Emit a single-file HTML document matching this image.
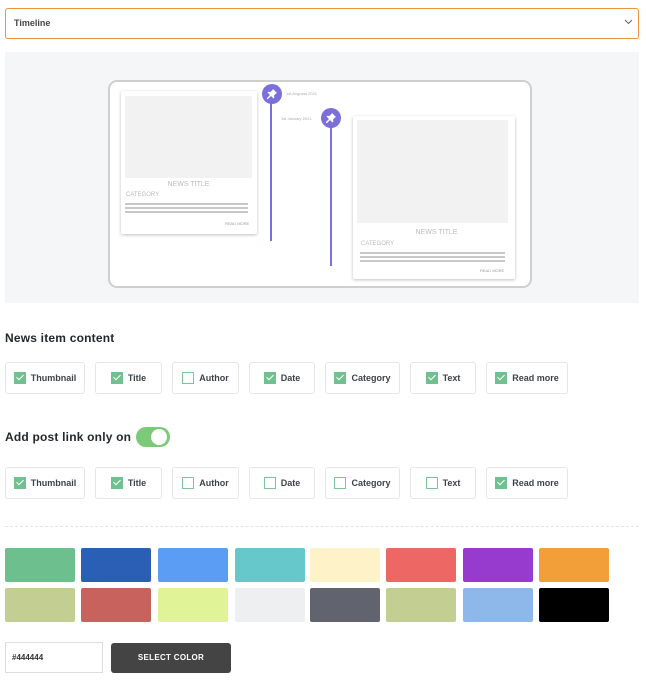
<!DOCTYPE html>
<html><head><meta charset="utf-8"><style>
*{box-sizing:border-box;margin:0;padding:0}
body{width:646px;height:692px;background:#fff;font-family:"Liberation Sans",sans-serif;position:relative;overflow:hidden;color:#23282d}
.a{position:absolute}
.sel{left:5px;top:8px;width:634px;height:31px;border:1px solid #f0923a;border-radius:3px;font-size:9px;font-weight:bold;color:#444;padding:9px 0 0 8px}
.cb{position:absolute;height:32px;border:1px solid #e6e6e6;border-radius:3px;font-size:9px;font-weight:bold;color:#3c434a;display:flex;align-items:center;justify-content:center;gap:5px}
.bx{width:12px;height:12px;border:1.5px solid #7cc49a;display:inline-block;position:relative}
.bx.on{background:#72c08f;border-color:#72c08f}
.bx.on:after{content:"";position:absolute;left:3px;top:0px;width:3px;height:6px;border:solid #fff;border-width:0 1.5px 1.5px 0;transform:rotate(45deg)}
h3{position:absolute;font-size:12px;font-weight:bold;color:#23282d;letter-spacing:.2px}
.sw{position:absolute;width:70px;height:34px;border-radius:2px}
.card{position:absolute;background:#fff;box-shadow:0 1px 3px rgba(0,0,0,.25);border-radius:2px}
.img{position:absolute;background:#f2f2f2}
.t{position:absolute;color:#bbb;font-size:7px;text-align:center}
.ln{position:absolute;height:2px;background:#c8c8c8}
.pin{position:absolute;width:20px;height:20px;border-radius:50%;background:#7b6fdc}
.vl{position:absolute;width:2px;background:#7b6fdc}
</style></head><body>
<div class="a sel">Timeline</div>
<svg class="a" style="left:624px;top:19px" width="9" height="6" viewBox="0 0 9 6"><path d="M1 1l3.5 3.5L8 1" fill="none" stroke="#666" stroke-width="1"/></svg>

<div class="a" style="left:5px;top:52px;width:634px;height:251px;background:#f5f6f8"></div>
<div class="a" style="left:108px;top:80px;width:424px;height:208px;border:2px solid #cfcfcf;border-radius:9px;background:#fff"></div>

<div class="card" style="left:121px;top:91px;width:136px;height:143px"></div>
<div class="img" style="left:125px;top:96px;width:127px;height:82px"></div>
<div class="t" style="left:125px;top:181px;width:127px;font-size:7px">NEWS TITLE</div>
<div class="t" style="left:126px;top:192px;font-size:6px">CATEGORY</div>
<div class="ln" style="left:125px;top:203px;width:123px"></div>
<div class="ln" style="left:125px;top:207px;width:123px"></div>
<div class="ln" style="left:125px;top:211px;width:123px"></div>
<div class="t" style="left:225px;top:221px;font-size:4px;color:#999">READ MORE</div>

<div class="vl" style="left:270px;top:95px;height:146px"></div>
<div class="pin" style="left:262px;top:84px"></div>
<div class="t" style="left:286px;top:91px;font-size:4px;color:#aaa">1st Auguest 2021</div>
<div class="vl" style="left:330px;top:119px;height:147px"></div>
<div class="pin" style="left:321px;top:108px"></div>
<div class="t" style="left:281px;top:116px;font-size:4px;color:#aaa">1st January 2021</div>
<svg class="a" style="left:266px;top:88px" width="12" height="12" viewBox="0 0 12 12"><path d="M7 1l4 4-1 .5-2 2 .3 2.2-.8.8L5 8 2 11 1 11 1 10 4 7 1.5 4.5l.8-.8 2.2.3 2-2z" fill="#fff"/></svg>
<svg class="a" style="left:325px;top:112px" width="12" height="12" viewBox="0 0 12 12"><path d="M7 1l4 4-1 .5-2 2 .3 2.2-.8.8L5 8 2 11 1 11 1 10 4 7 1.5 4.5l.8-.8 2.2.3 2-2z" fill="#fff"/></svg>

<div class="card" style="left:353px;top:116px;width:162px;height:163px"></div>
<div class="img" style="left:357px;top:120px;width:151px;height:103px"></div>
<div class="t" style="left:357px;top:229px;width:159px;font-size:7px">NEWS TITLE</div>
<div class="t" style="left:361px;top:241px;font-size:6px">CATEGORY</div>
<div class="ln" style="left:360px;top:252px;width:145px"></div>
<div class="ln" style="left:360px;top:256px;width:145px"></div>
<div class="ln" style="left:360px;top:260px;width:145px"></div>
<div class="t" style="left:480px;top:268px;font-size:4px;color:#999">READ MORE</div>

<h3 style="left:5px;top:331px">News item content</h3>
<div class="cb" style="left:5px;top:362px;width:80px"><span class="bx on"></span>Thumbnail</div>
<div class="cb" style="left:95px;top:362px;width:67px"><span class="bx on"></span>Title</div>
<div class="cb" style="left:172px;top:362px;width:67px"><span class="bx"></span>Author</div>
<div class="cb" style="left:249px;top:362px;width:66px"><span class="bx on"></span>Date</div>
<div class="cb" style="left:325px;top:362px;width:75px"><span class="bx on"></span>Category</div>
<div class="cb" style="left:410px;top:362px;width:66px"><span class="bx on"></span>Text</div>
<div class="cb" style="left:486px;top:362px;width:82px"><span class="bx on"></span>Read more</div>

<h3 style="left:5px;top:430px">Add post link only on</h3>
<div class="a" style="left:136px;top:427px;width:34px;height:20px;border-radius:10px;background:#7cc978"></div>
<div class="a" style="left:151px;top:429px;width:16px;height:16px;border-radius:50%;background:#fff"></div>

<div class="cb" style="left:5px;top:467px;width:80px"><span class="bx on"></span>Thumbnail</div>
<div class="cb" style="left:95px;top:467px;width:67px"><span class="bx on"></span>Title</div>
<div class="cb" style="left:172px;top:467px;width:67px"><span class="bx"></span>Author</div>
<div class="cb" style="left:249px;top:467px;width:66px"><span class="bx"></span>Date</div>
<div class="cb" style="left:325px;top:467px;width:75px"><span class="bx"></span>Category</div>
<div class="cb" style="left:410px;top:467px;width:66px"><span class="bx"></span>Text</div>
<div class="cb" style="left:486px;top:467px;width:82px"><span class="bx on"></span>Read more</div>

<div class="a" style="left:5px;top:526px;width:634px;border-top:1px dashed #e4e4e4"></div>

<div class="sw" style="left:5px;top:548px;background:#6dbf8e"></div>
<div class="sw" style="left:81px;top:548px;background:#2b5fb5"></div>
<div class="sw" style="left:158px;top:548px;background:#5b9cf4"></div>
<div class="sw" style="left:235px;top:548px;background:#67c8cb"></div>
<div class="sw" style="left:310px;top:548px;background:#fdf2c8"></div>
<div class="sw" style="left:386px;top:548px;background:#ed6764"></div>
<div class="sw" style="left:463px;top:548px;background:#973bcf"></div>
<div class="sw" style="left:539px;top:548px;background:#f29f3a"></div>
<div class="sw" style="left:5px;top:588px;background:#c2ce92"></div>
<div class="sw" style="left:81px;top:588px;background:#c8625d"></div>
<div class="sw" style="left:158px;top:588px;background:#e0f396"></div>
<div class="sw" style="left:235px;top:588px;background:#eeeff1"></div>
<div class="sw" style="left:310px;top:588px;background:#61636f"></div>
<div class="sw" style="left:386px;top:588px;background:#c2ce92"></div>
<div class="sw" style="left:463px;top:588px;background:#8fb8ea"></div>
<div class="sw" style="left:539px;top:588px;background:#000"></div>

<div class="a" style="left:5px;top:642px;width:98px;height:31px;border:1px solid #ddd;font-size:8px;font-weight:bold;color:#333;padding:10px 0 0 6px">#444444</div>
<div class="a" style="left:111px;top:643px;width:120px;height:30px;background:#444;border-radius:3px;color:#fff;font-size:8px;font-weight:bold;text-align:center;line-height:30px;letter-spacing:.3px">SELECT COLOR</div>
</body></html>
